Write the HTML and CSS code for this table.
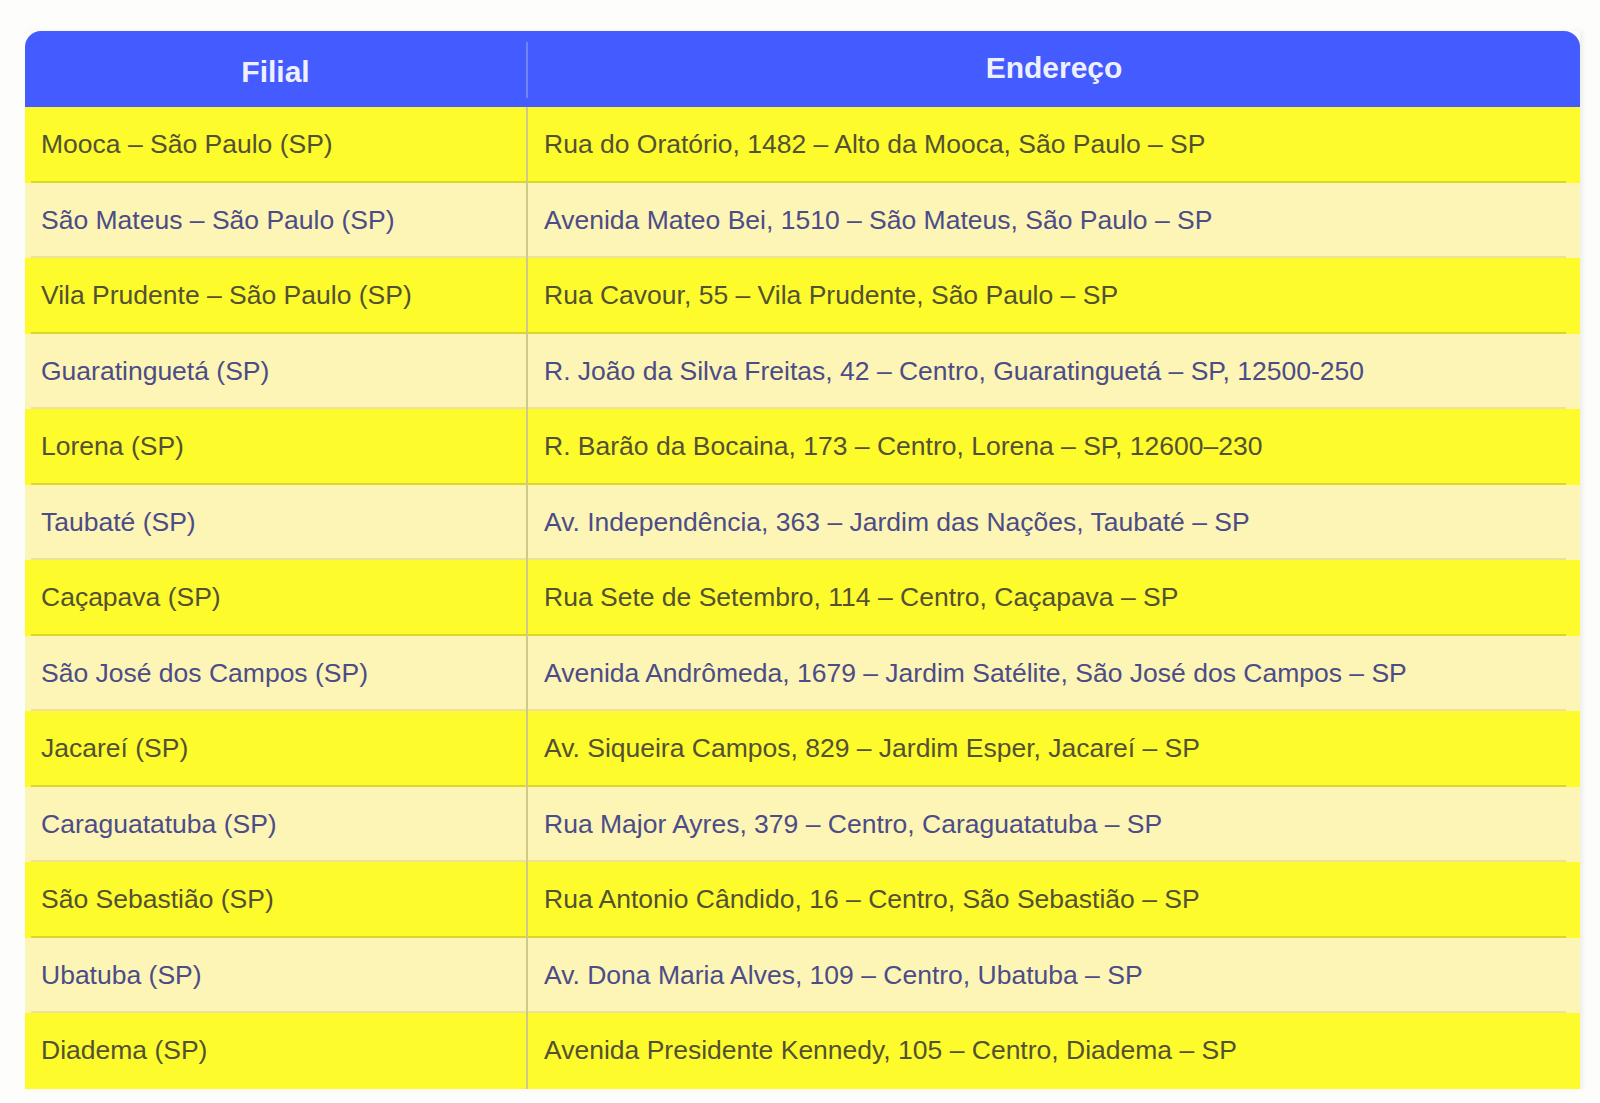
FILE: index.html
```html
<!DOCTYPE html>
<html lang="pt-BR">
<head>
<meta charset="utf-8">
<title>Filiais</title>
<link rel="stylesheet" href="styles.css">
</head>
<body>
<div class="page">
  <div class="table">
    <div class="head">
      <div class="hcell first">Filial</div>
      <div class="hcell second">Endereço</div>
    </div>
    <div class="row odd"><div class="cell c1">Mooca – São Paulo (SP)</div><div class="cell c2">Rua do Oratório, 1482 – Alto da Mooca, São Paulo – SP</div></div>
    <div class="row even"><div class="cell c1">São Mateus – São Paulo (SP)</div><div class="cell c2">Avenida Mateo Bei, 1510 – São Mateus, São Paulo – SP</div></div>
    <div class="row odd"><div class="cell c1">Vila Prudente – São Paulo (SP)</div><div class="cell c2">Rua Cavour, 55 – Vila Prudente, São Paulo – SP</div></div>
    <div class="row even"><div class="cell c1">Guaratinguetá (SP)</div><div class="cell c2">R. João da Silva Freitas, 42 – Centro, Guaratinguetá – SP, 12500-250</div></div>
    <div class="row odd"><div class="cell c1">Lorena (SP)</div><div class="cell c2">R. Barão da Bocaina, 173 – Centro, Lorena – SP, 12600–230</div></div>
    <div class="row even"><div class="cell c1">Taubaté (SP)</div><div class="cell c2">Av. Independência, 363 – Jardim das Nações, Taubaté – SP</div></div>
    <div class="row odd"><div class="cell c1">Caçapava (SP)</div><div class="cell c2">Rua Sete de Setembro, 114 – Centro, Caçapava – SP</div></div>
    <div class="row even"><div class="cell c1">São José dos Campos (SP)</div><div class="cell c2">Avenida Andrômeda, 1679 – Jardim Satélite, São José dos Campos – SP</div></div>
    <div class="row odd"><div class="cell c1">Jacareí (SP)</div><div class="cell c2">Av. Siqueira Campos, 829 – Jardim Esper, Jacareí – SP</div></div>
    <div class="row even"><div class="cell c1">Caraguatatuba (SP)</div><div class="cell c2">Rua Major Ayres, 379 – Centro, Caraguatatuba – SP</div></div>
    <div class="row odd"><div class="cell c1">São Sebastião (SP)</div><div class="cell c2">Rua Antonio Cândido, 16 – Centro, São Sebastião – SP</div></div>
    <div class="row even"><div class="cell c1">Ubatuba (SP)</div><div class="cell c2">Av. Dona Maria Alves, 109 – Centro, Ubatuba – SP</div></div>
    <div class="row odd last"><div class="cell c1">Diadema (SP)</div><div class="cell c2">Avenida Presidente Kennedy, 105 – Centro, Diadema – SP</div></div>
  </div>
</div>
</body>
</html>
```

FILE: styles.css
```css
html, body {
  margin: 0;
  padding: 0;
  background: #fdfdfb;
}
.page {
  padding: 31px 20px 15px 25px;
  font-family: "Liberation Sans", Arial, sans-serif;
}
.table {
  width: 1555px;
  display: flex;
  flex-direction: column;
  box-shadow: 3px 0 4px rgba(200, 200, 190, 0.25);
}
.head {
  display: grid;
  grid-template-columns: 503px 1052px;
  height: 76px;
  background: #435bff;
  border-radius: 16px 16px 0 0;
}
.hcell {
  color: #eef0ff;
  font-weight: bold;
  font-size: 30px;
  display: flex;
  align-items: center;
  justify-content: center;
  box-sizing: border-box;
}
.hcell.first {
  padding-top: 5px;
  border-right: 2px solid #7284fb;
  border-image: linear-gradient(to bottom, #435bff 0, #435bff 12px, #7284fb 12px, #7284fb 66px, #435bff 66px) 1;
}
.hcell.second {
  padding-bottom: 2px;
}
.row {
  display: grid;
  grid-template-columns: 503px 1052px;
  height: 75.5px;
  background-repeat: no-repeat;
  background-position: 6px bottom;
  background-size: 1535px 2px;
}
.row.odd {
  background-color: #fdfb2b;
  background-image: linear-gradient(#dcd62a, #dcd62a);
  color: #535134;
}
.row.even {
  background-color: #fdf5b6;
  background-image: linear-gradient(#ebe39a, #ebe39a);
  color: #4c4c88;
}
.row.last {
  background-image: none;
}
.cell {
  font-size: 26.5px;
  display: flex;
  align-items: center;
  padding-left: 16px;
  white-space: nowrap;
}
.c1 {
  border-right: 2px solid #cfc98a;
  box-sizing: border-box;
}
```
